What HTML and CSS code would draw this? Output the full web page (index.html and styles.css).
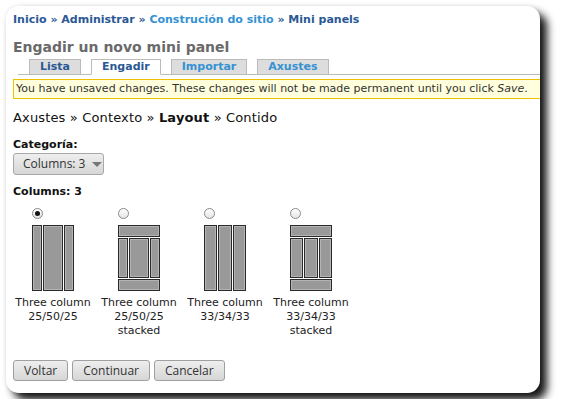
FILE: index.html
```html
<!DOCTYPE html>
<html>
<head>
<meta charset="utf-8">
<link rel="stylesheet" href="styles.css">
</head>
<body>
<div class="card">
  <div class="crumbs">
    <a class="dk">Inicio</a> » <a class="dk">Administrar</a> » <a class="lt">Construción do sitio</a> » <a class="dk">Mini panels</a>
  </div>
  <h1 class="title">Engadir un novo mini panel</h1>
  <ul class="tabs">
    <li class="tab dk">Lista</li>
    <li class="tab active dk">Engadir</li>
    <li class="tab lt">Importar</li>
    <li class="tab lt">Axustes</li>
  </ul>
  <div class="warning">You have unsaved changes. These changes will not be made permanent until you click <em>Save</em>.</div>
  <div class="trail">Axustes » Contexto » <strong>Layout</strong> » Contido</div>
  <div class="field-label">Categoría:</div>
  <div class="select">Columns: 3 <span class="caret"></span></div>
  <div class="field-label cols-label">Columns: 3</div>
  <div class="layouts">
    <div class="layout">
      <div class="pick">
        <span class="radio checked"></span>
        <div class="icon row">
          <div class="p w10"></div><div class="p w20"></div><div class="p w10"></div>
        </div>
      </div>
      <div class="cap">Three column<br>25/50/25</div>
    </div>
    <div class="layout">
      <div class="pick">
        <span class="radio"></span>
        <div class="icon stack">
          <div class="p bar"></div>
          <div class="mid"><div class="p w10"></div><div class="p w20"></div><div class="p w10"></div></div>
          <div class="p bar"></div>
        </div>
      </div>
      <div class="cap">Three column<br>25/50/25<br>stacked</div>
    </div>
    <div class="layout">
      <div class="pick">
        <span class="radio"></span>
        <div class="icon row">
          <div class="p w13"></div><div class="p w14"></div><div class="p w13"></div>
        </div>
      </div>
      <div class="cap">Three column<br>33/34/33</div>
    </div>
    <div class="layout">
      <div class="pick">
        <span class="radio"></span>
        <div class="icon stack">
          <div class="p bar"></div>
          <div class="mid"><div class="p w13"></div><div class="p w14"></div><div class="p w13"></div></div>
          <div class="p bar"></div>
        </div>
      </div>
      <div class="cap">Three column<br>33/34/33<br>stacked</div>
    </div>
  </div>
  <div class="buttons">
    <button class="btn">Voltar</button>
    <button class="btn">Continuar</button>
    <button class="btn">Cancelar</button>
  </div>
</div>
</body>
</html>
```
FILE: styles.css
```css
html, body { margin: 0; padding: 0; background: #fff; }
body {
  padding: 6px;
  font-family: "DejaVu Sans", Verdana, sans-serif;
  font-size: 11px;
  color: #222;
}
.card {
  width: 534px;
  height: 387px;
  box-sizing: border-box;
  background: #fff;
  border-radius: 13px;
  box-shadow: 7px 7px 9px rgba(0,0,0,0.92), 0 0 5px rgba(0,0,0,0.1);
  padding: 7px 0 0 7px;
  overflow: hidden;
}
.dk { color: #2a5894; }
.lt { color: #3592d2; }
.crumbs {
  font-weight: bold;
  font-size: 11px;
  line-height: 14px;
  color: #2a5894;
}
.title {
  margin: 11px 0 0;
  font-size: 14px;
  line-height: 18px;
  color: #6a6a6a;
  font-weight: bold;
}
.tabs {
  list-style: none;
  margin: 3px 0 0 5px;
  padding: 0 0 0 11px;
  display: flex;
  align-items: flex-end;
  gap: 10px;
  border-bottom: 1px solid #bbb;
}
.tab {
  font-weight: bold;
  font-size: 11px;
  line-height: 14px;
  padding: 0 10px;
  background: #ddd;
  border: 1px solid #bbb;
  border-bottom: none;
}
.tab.active {
  background: #fff;
  border-bottom: 1px solid #fff;
  margin-bottom: -1px;
}
.warning {
  margin-top: 4px;
  background: #ffffdd;
  border: 1px solid #edc000;
  border-right: none;
  line-height: 18px;
  padding: 0 2px;
  color: #333;
  font-size: 11px;
}
.trail {
  margin-top: 11px;
  font-size: 13px;
  line-height: 16px;
  color: #111;
  letter-spacing: 0.15px;
}
.field-label {
  margin-top: 12px;
  font-weight: bold;
  line-height: 14px;
  color: #111;
}
.select {
  margin-top: 1px;
  width: 91px;
  height: 22px;
  box-sizing: border-box;
  border: 1px solid #a8a8a8;
  border-radius: 3px;
  background: linear-gradient(#eeeeee, #d6d6d6);
  font-family: "Open Sans", "DejaVu Sans", sans-serif;
  font-size: 12px;
  line-height: 20px;
  color: #333;
  padding-left: 9px;
  display: flex;
  align-items: center;
  gap: 7px;
}
.caret {
  width: 0; height: 0;
  border-left: 5px solid transparent;
  border-right: 5px solid transparent;
  border-top: 5px solid #777;
  margin-top: 1px;
}
.cols-label { margin-top: 10px; }
.layouts {
  display: flex;
  gap: 6px;
  margin-top: 9px;
}
.layout {
  width: 80px;
  display: flex;
  flex-direction: column;
  align-items: center;
}
.pick {
  width: 42px;
  display: flex;
  flex-direction: column;
  align-items: flex-start;
  gap: 6px;
}
.radio {
  width: 11px; height: 11px;
  box-sizing: border-box;
  border: 1px solid #8a8a8a;
  border-radius: 50%;
  background: linear-gradient(#ffffff, #e4e4e4);
  display: flex;
  align-items: center;
  justify-content: center;
}
.radio.checked::after {
  content: "";
  width: 5px; height: 5px;
  border-radius: 50%;
  background: #111;
}
.icon {
  width: 42px;
  height: 66px;
  display: flex;
  gap: 1px;
}
.icon.stack { flex-direction: column; }
.mid { display: flex; gap: 1px; flex: 1; }
.p {
  box-sizing: border-box;
  border: 1px solid #2a2a2a;
  background: #999;
  box-shadow: inset 0 0 0 1px #b4b4b4;
}
.row .p { height: 100%; }
.w10 { width: 10px; }
.w20 { width: 20px; }
.w13 { width: 13px; }
.w14 { width: 14px; }
.bar { height: 12px; width: 42px; }
.cap {
  margin-top: 5px;
  text-align: center;
  line-height: 14px;
  font-size: 11px;
  color: #222;
  white-space: nowrap;
}
.buttons {
  margin-top: 22px;
  display: flex;
  gap: 4px;
}
.btn {
  height: 21px;
  box-sizing: border-box;
  border: 1px solid #a0a0a0;
  border-radius: 3px;
  background: linear-gradient(#eeeeee, #d6d6d6);
  font-family: "Open Sans", "DejaVu Sans", sans-serif;
  font-size: 12px;
  line-height: 19px;
  color: #333;
  padding: 0 10px;
  margin: 0;
}
```
